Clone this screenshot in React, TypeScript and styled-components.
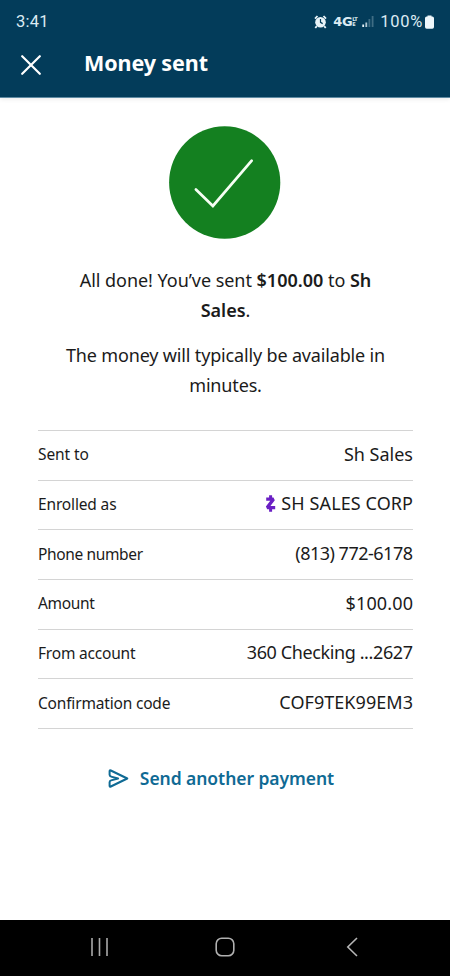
import React from "react";
import styled, { createGlobalStyle } from "styled-components";

const GlobalStyle = createGlobalStyle`
  * { box-sizing: border-box; }
  body { margin: 0; background: #fff; }
`;

const Screen = styled.div`
  display: flex;
  flex-direction: column;
  width: 450px;
  height: 976px;
  overflow: hidden;
  background: #fff;
  color: #1b1b1b;
  font-family: "Noto Sans", sans-serif;
`;

const Header = styled.header`
  height: 98px;
  flex: none;
  background: #033c5a;
  border-bottom: 1px solid #5f8ba3;
  box-shadow: 0 1px 5px rgba(0, 0, 0, 0.09);
  color: #fff;
`;

const StatusBar = styled.div`
  display: flex;
  align-items: center;
  justify-content: space-between;
  height: 43px;
  padding: 0 16px 0 16px;
  font-family: Roboto, sans-serif;
  font-size: 16.5px;
  color: #dcebf3;
`;

const Clock = styled.span`
  letter-spacing: 0.2px;
`;

const StatusIcons = styled.div`
  display: flex;
  align-items: center;
`;

const Percent = styled.span`
  margin: 0 2px 0 6px;
  letter-spacing: 0.7px;
`;

const Network = styled.span`
  display: flex;
  align-items: center;
  margin: 0 5px 0 6px;
  font-family: "DejaVu Sans", sans-serif;
  font-size: 13px;
  font-weight: 700;
  line-height: 13px;
  letter-spacing: -0.4px;
`;

const NetworkSub = styled.span`
  display: flex;
  flex-direction: column;
  width: 5px;
  font-size: 5px;
  line-height: 5px;
`;

const TitleBar = styled.div`
  display: flex;
  align-items: center;
  height: 43px;
  padding-left: 21px;
`;

const Title = styled.h1`
  margin: -3px 0 0 43px;
  font-size: 21.5px;
  line-height: 30px;
  font-weight: 700;
  letter-spacing: -0.1px;
`;

const Content = styled.main`
  display: flex;
  flex: 1;
  flex-direction: column;
  align-items: center;
  padding: 28px 37px 0 38px;
`;

const Message = styled.p<{ $gap: number; $track: number }>`
  width: 340px;
  margin: ${(p) => p.$gap}px 0 0;
  font-size: 18px;
  line-height: 30px;
  letter-spacing: ${(p) => p.$track}px;
  text-align: center;
`;

const Strong = styled.strong`
  font-weight: 600;
  letter-spacing: 0;
`;

const Details = styled.dl`
  width: 100%;
  margin: 30px 0 0;
  border-top: 1px solid #d4d4d4;
`;

const Row = styled.div`
  display: flex;
  align-items: center;
  justify-content: space-between;
  height: 49.67px;
  padding-bottom: 2px;
  border-bottom: 1px solid #d4d4d4;
`;

const Label = styled.dt<{ $track: number }>`
  font-size: 15.5px;
  letter-spacing: ${(p) => p.$track}px;
`;

const Value = styled.dd<{ $track: number }>`
  display: flex;
  align-items: center;
  gap: 4px;
  margin: 0 ${(p) => -p.$track}px 1px 0;
  font-size: 18px;
  letter-spacing: ${(p) => p.$track}px;
`;

const SendAgain = styled.button`
  display: flex;
  align-items: center;
  gap: 11px;
  margin: 34px 0 0 -9px;
  padding: 0;
  border: 0;
  background: none;
  color: #0f6a94;
  font: 600 17.5px/30px "Noto Sans", sans-serif;
  letter-spacing: -0.06px;
`;

const NavBar = styled.nav`
  display: flex;
  flex: none;
  align-items: center;
  justify-content: space-between;
  height: 56px;
  padding: 0 92px 2px 89px;
  background: #000;
`;

const NavGroup = styled.span<{ $shift?: number }>`
  display: flex;
  margin-right: ${(p) => p.$shift ?? 0}px;
`;

const rows = [
  { label: "Sent to", lt: -0.1, value: "Sh Sales", vt: 0 },
  { label: "Enrolled as", lt: -0.15, value: "SH SALES CORP", vt: 0.1, zelle: true },
  { label: "Phone number", lt: -0.36, value: "(813) 772-6178", vt: -0.5 },
  { label: "Amount", lt: -0.35, value: "$100.00", vt: 0.15 },
  { label: "From account", lt: -0.2, value: "360 Checking ...2627", vt: -0.39 },
  { label: "Confirmation code", lt: -0.18, value: "COF9TEK99EM3", vt: 0.05 },
];

const AlarmIcon = () => (
  <svg width="13" height="14" viewBox="0 0 13 14">
    <path d="M1 3.6 3.5 1M12 3.6 9.5 1M2.8 11.2 1.3 13M10.2 11.2 11.7 13" stroke="#e8f3f8" strokeWidth="1.8" />
    <circle cx="6.5" cy="7.2" r="5.3" fill="#e8f3f8" />
    <path d="M6.5 4v3.4l2.2 1.2" stroke="#033c5a" strokeWidth="1.2" fill="none" />
  </svg>
);

const SignalIcon = () => (
  <svg width="12" height="13" viewBox="0 0 12 13">
    <path d="M1.2 12V9.5" stroke="#e8f3f8" strokeWidth="1.8" />
    <path d="M4.3 12V7.5" stroke="#b4cad5" strokeWidth="1.8" />
    <path d="M7.4 12V4M10.6 12V1" stroke="#3f6d84" strokeWidth="1.8" />
  </svg>
);

const BatteryIcon = () => (
  <svg width="9" height="14" viewBox="0 0 9 14">
    <path d="M2.5 1.5V.4h4v1.1h.8A1.7 1.7 0 0 1 9 3.2V12a1.7 1.7 0 0 1-1.7 1.7H1.7A1.7 1.7 0 0 1 0 12V3.2A1.7 1.7 0 0 1 1.7 1.5Z" fill="#eef7fb" />
  </svg>
);

const CloseIcon = () => (
  <svg width="20" height="20" viewBox="0 0 20 20">
    <path d="m1.2 1.2 17.6 17.6M18.8 1.2 1.2 18.8" stroke="#fff" strokeWidth="2.2" strokeLinecap="round" />
  </svg>
);

const SuccessIcon = () => (
  <svg width="113" height="113" viewBox="0 0 113 113">
    <ellipse cx="55.7" cy="56.5" rx="55.6" ry="56.3" fill="#148020" />
    <path d="m26.9 63.5 17 16.5 38.8-45.3" fill="none" stroke="#f6fff4" strokeWidth="2.7" strokeLinecap="round" />
  </svg>
);

const ZelleIcon = () => (
  <svg width="12" height="18" viewBox="0 0 12 18">
    <path d="M1.2 5.2h7.300L2.200 13.600h8" fill="none" stroke="#6a1fc4" strokeWidth="3.300" strokeLinejoin="bevel" />
    <path d="M5.600 1.200v3.500M5.600 14v3.700" stroke="#6a1fc4" strokeWidth="3" />
  </svg>
);

const SendIcon = () => (
  <svg width="21" height="20" viewBox="0 0 21 20">
    <path d="M1.6 3.2v3.6q0 1.5 1.5 1.8l7 1.9-7 1.9q-1.500.4-1.500 1.900v3.500q0 1.200 1.200.7L19.300 10.500 2.800 2.500q-1.200-.5-1.200.7Z" fill="none" stroke="#0f6a94" strokeWidth="2" strokeLinejoin="round" />
  </svg>
);

const RecentsIcon = () => (
  <svg width="20" height="20" viewBox="0 0 20 20">
    <path d="M3 1v18M10.5 1v18M18 1v18" stroke="#a9a9a9" strokeWidth="1.6" />
  </svg>
);

const HomeIcon = () => (
  <svg width="20" height="20" viewBox="0 0 20 20">
    <rect x="1.2" y="1.2" width="17.6" height="17.6" rx="5.5" fill="none" stroke="#b0b0b0" strokeWidth="1.6" />
  </svg>
);

const BackIcon = () => (
  <svg width="12" height="20" viewBox="0 0 12 20">
    <path d="M11 1 1.8 10 11 19" fill="none" stroke="#b5b5b5" strokeWidth="1.6" />
  </svg>
);

export default function App() {
  return (
    <Screen>
      <GlobalStyle />
      <Header>
        <StatusBar>
          <Clock>3:41</Clock>
          <StatusIcons>
            <AlarmIcon />
            <Network>
              4G
              <NetworkSub>
                <span>LT</span>
                <span>E</span>
              </NetworkSub>
            </Network>
            <SignalIcon />
            <Percent>100%</Percent>
            <BatteryIcon />
          </StatusIcons>
        </StatusBar>
        <TitleBar>
          <CloseIcon />
          <Title>Money sent</Title>
        </TitleBar>
      </Header>
      <Content>
        <SuccessIcon />
        <Message $gap={26} $track={-0.04}>
          All done! You’ve sent <Strong>$100.00</Strong> to <Strong>Sh</Strong>{" "}
          <Strong>Sales</Strong>.
        </Message>
        <Message $gap={15} $track={-0.16}>The money will typically be available in minutes.</Message>
        <Details>
          {rows.map((row) => (
            <Row key={row.label}>
              <Label $track={row.lt}>{row.label}</Label>
              <Value $track={row.vt}>
                {row.zelle && <ZelleIcon />}
                {row.value}
              </Value>
            </Row>
          ))}
        </Details>
        <SendAgain>
          <SendIcon />
          Send another payment
        </SendAgain>
      </Content>
      <NavBar>
        <NavGroup><RecentsIcon /></NavGroup>
        <NavGroup $shift={5}><HomeIcon /></NavGroup>
        <NavGroup><BackIcon /></NavGroup>
      </NavBar>
    </Screen>
  );
}
